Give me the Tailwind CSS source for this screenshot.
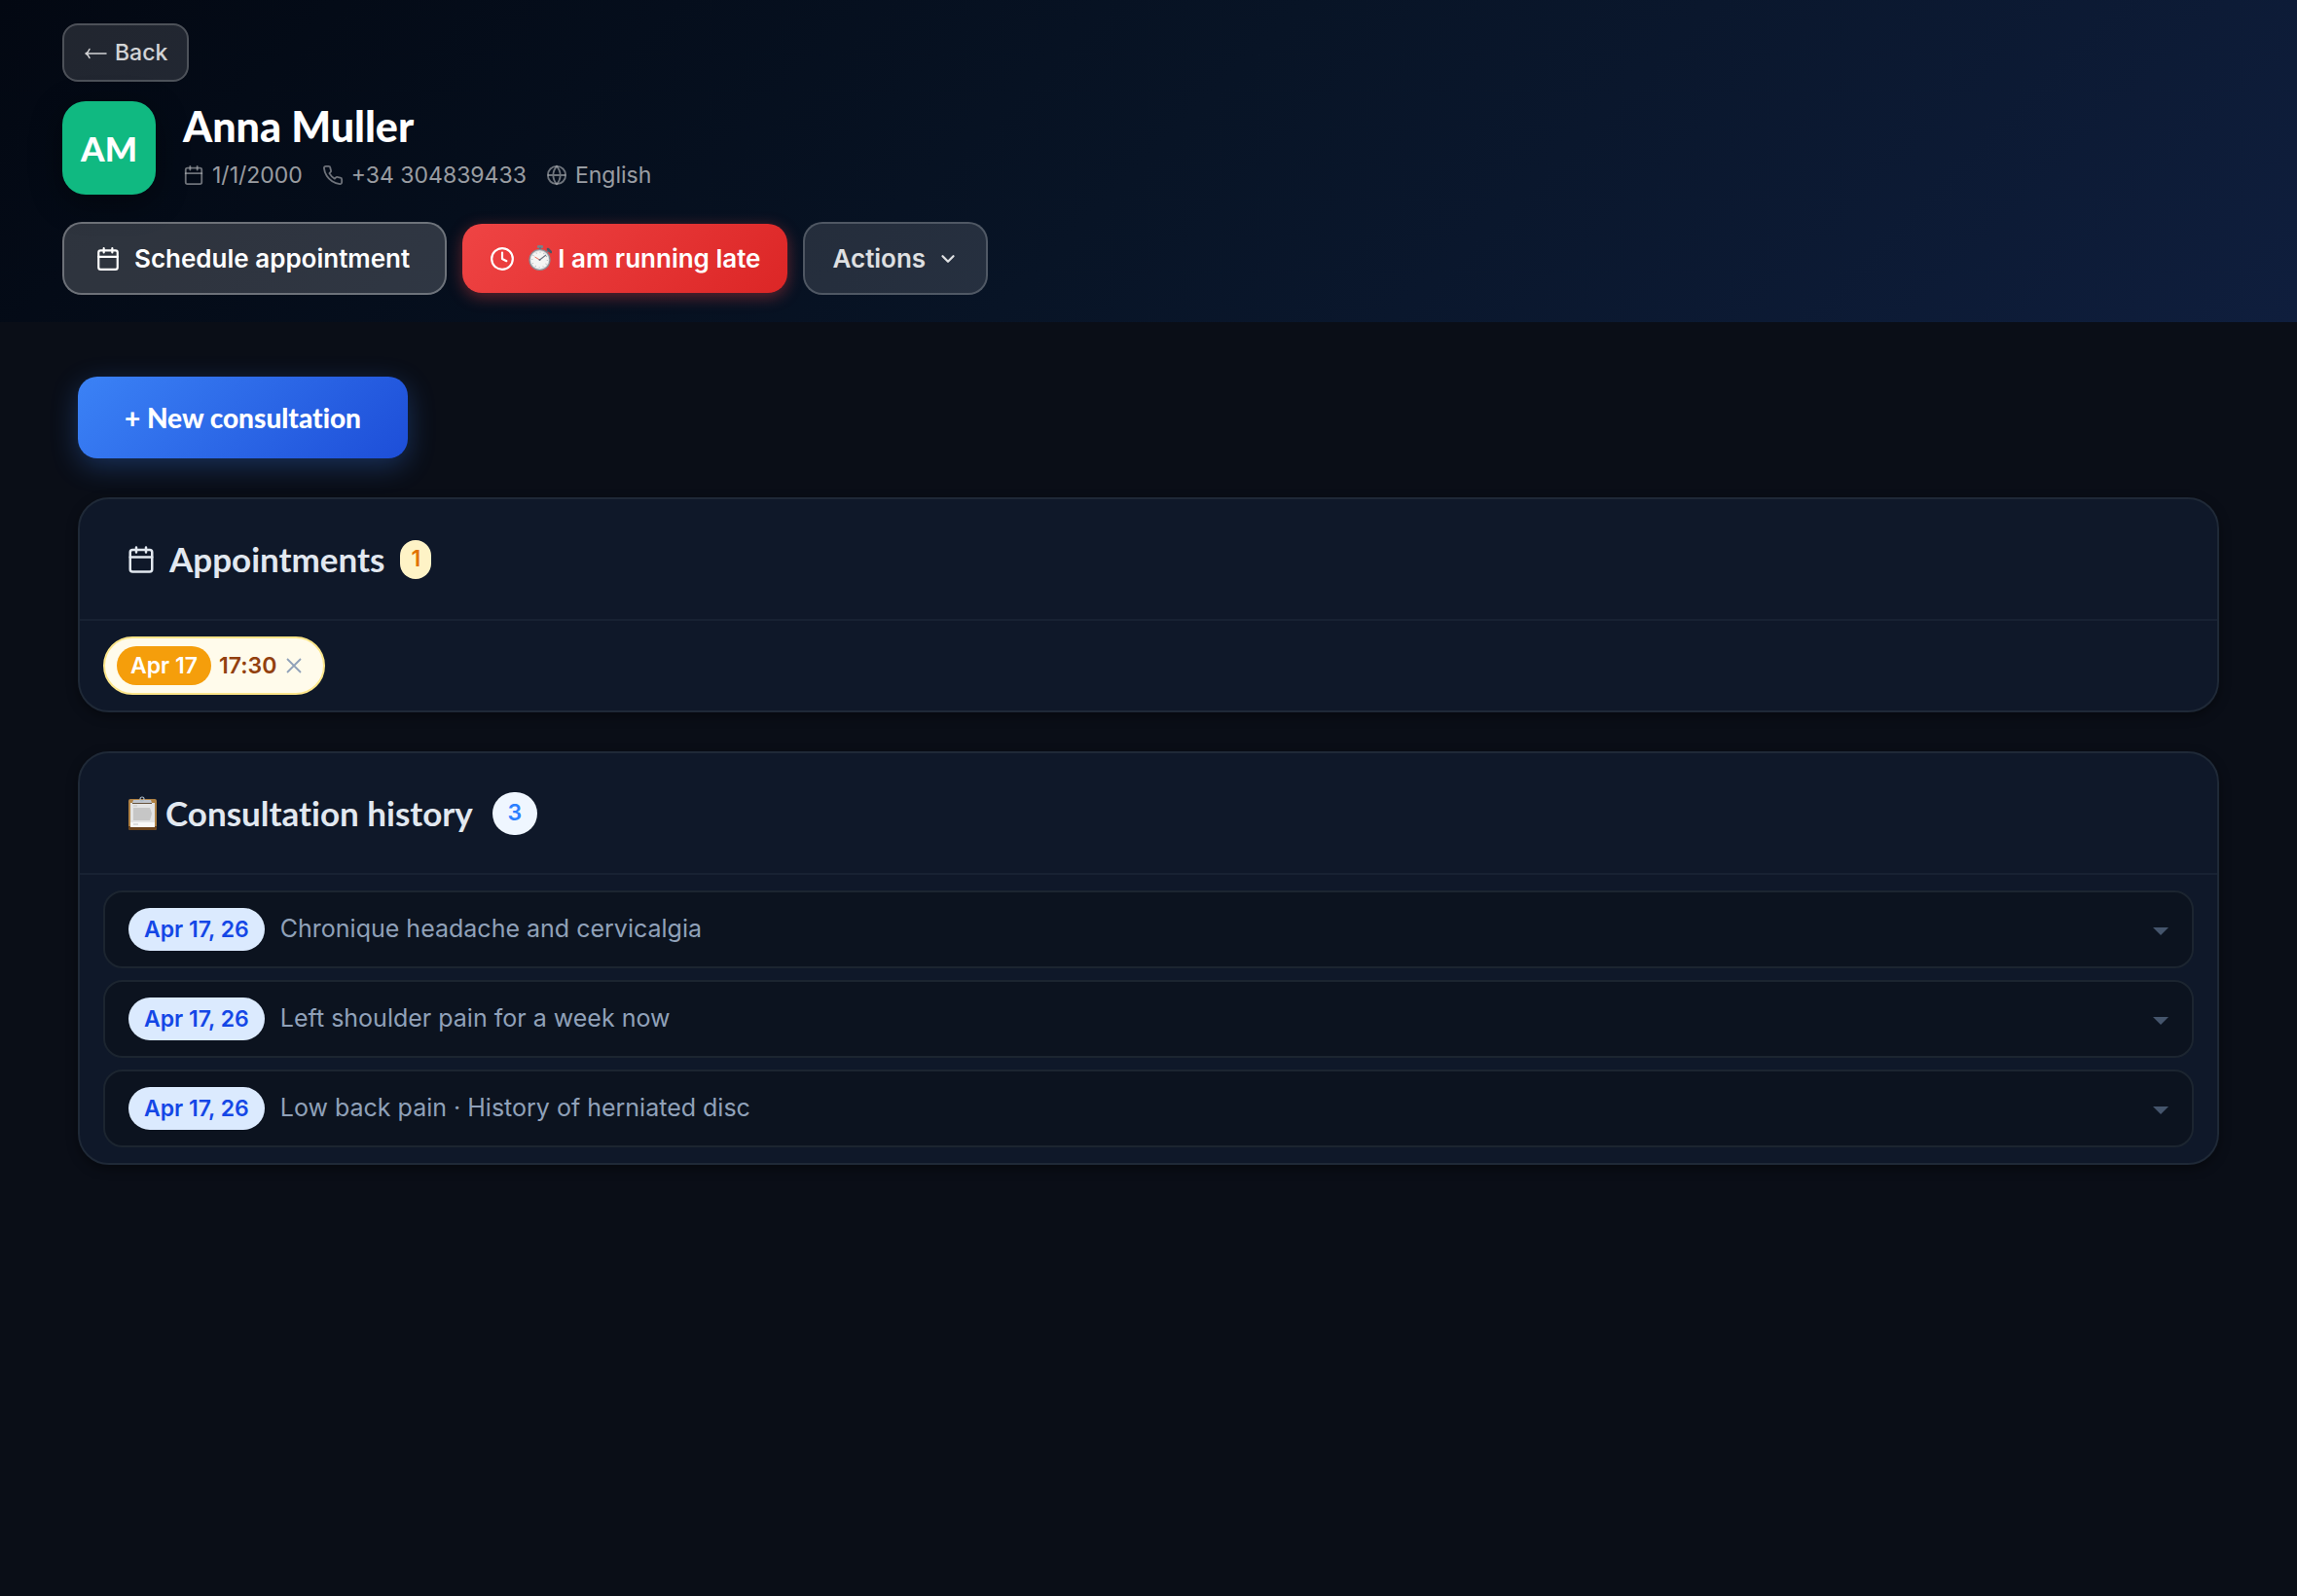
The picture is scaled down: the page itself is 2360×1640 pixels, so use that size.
<!DOCTYPE html>
<html lang="en">
<head>
    <meta charset="UTF-8">
    <meta name="viewport" content="width=device-width, initial-scale=1.0">
    <title>Anna Muller</title>
    <script src="https://cdn.jsdelivr.net/npm/@tailwindcss/browser@4"></script>
</head>
<body class="bg-[#0a0e17] min-h-screen font-['Inter',sans-serif] text-slate-200">
    <!-- Shared icons -->
    <svg class="hidden" aria-hidden="true">
        <symbol id="calendar" viewBox="0 0 24 24" fill="none" stroke="currentColor" stroke-width="2" stroke-linecap="round" stroke-linejoin="round">
            <rect x="3" y="4" width="18" height="18" rx="2"/>
            <path d="M16 2v4M8 2v4M3 10h18"/>
        </symbol>
        <symbol id="caret" viewBox="0 0 16 8">
            <path d="M0 0h16L8 8z" fill="currentColor"/>
        </symbol>
    </svg>

    <header class="bg-linear-135 from-[#030812] via-[#081426] to-[#0f1e3d] px-16 pt-6 pb-7">
        <button type="button" class="flex items-center gap-2 h-15 px-5 rounded-2xl border-2 border-white/20 bg-white/12 text-[23px] font-medium text-white/80">
            <svg class="w-6 h-6" viewBox="0 0 24 24" fill="none" stroke="currentColor" stroke-width="1.5" stroke-linecap="round" stroke-linejoin="round" aria-hidden="true">
                <path d="M23 13H2M6 8.500c-1 2.500-2.500 4-4 4.500 1.500.5 3 2 4 4.500"/>
            </svg>
            Back
        </button>

        <div class="flex items-center gap-7 mt-5">
            <div class="flex items-center justify-center w-24 h-24 rounded-3xl bg-[#10b981] shadow-[0_8px_32px_rgba(0,0,0,0.4)] font-['Lato',sans-serif] text-[35px] font-black text-white">AM</div>
            <div>
                <h1 class="font-['Lato',sans-serif] text-[43px] leading-[48px] font-black text-white">Anna Muller</h1>
                <div class="flex items-center gap-5 mt-2 text-[23px] leading-9 text-white/60">
                    <span class="flex items-center gap-2">
                        <svg class="w-[22px] h-[22px] opacity-70" aria-hidden="true"><use href="#calendar"/></svg>
                        1/1/2000
                    </span>
                    <span class="flex items-center gap-2">
                        <svg class="w-[22px] h-[22px] opacity-70" viewBox="0 0 24 24" fill="none" stroke="currentColor" stroke-width="2" stroke-linecap="round" stroke-linejoin="round" aria-hidden="true">
                            <path d="M22 16.920v3a2 2 0 0 1-2.180 2 19.790 19.790 0 0 1-8.630-3.070 19.500 19.500 0 0 1-6-6 19.790 19.790 0 0 1-3.070-8.670A2 2 0 0 1 4.110 2h3a2 2 0 0 1 2 1.720 12.840 12.840 0 0 0 .7 2.810 2 2 0 0 1-.45 2.110L8.090 9.910a16 16 0 0 0 6 6l1.270-1.270a2 2 0 0 1 2.110-.45 12.840 12.840 0 0 0 2.810.7A2 2 0 0 1 22 16.920z"/>
                        </svg>
                        +34 304839433
                    </span>
                    <span class="flex items-center gap-2">
                        <svg class="w-[22px] h-[22px] opacity-70" viewBox="0 0 24 24" fill="none" stroke="currentColor" stroke-width="2" aria-hidden="true">
                            <circle cx="12" cy="12" r="10"/>
                            <path d="M2 12h20M12 2a15.300 15.300 0 0 1 4 10 15.300 15.300 0 0 1-4 10 15.300 15.300 0 0 1-4-10 15.300 15.300 0 0 1 4-10z"/>
                        </svg>
                        English
                    </span>
                </div>
            </div>
        </div>

        <div class="flex items-center gap-4 mt-7 text-[26px] font-semibold">
            <button type="button" class="flex items-center gap-3.5 h-[75px] pl-8 pr-9 rounded-[20px] border-2 border-white/30 bg-white/17 text-white">
                <svg class="w-[26px] h-[26px]" aria-hidden="true"><use href="#calendar"/></svg>
                Schedule appointment
            </button>
            <button type="button" class="flex items-center gap-3.5 h-[71px] px-7 rounded-[20px] bg-[linear-gradient(135deg,#ef4444,#dc2626)] shadow-[0_4px_16px_rgba(239,68,68,0.4)] text-white">
                <svg class="w-[26px] h-[26px]" viewBox="0 0 24 24" fill="none" stroke="currentColor" stroke-width="2" stroke-linecap="round" stroke-linejoin="round" aria-hidden="true">
                    <circle cx="12" cy="12" r="10"/>
                    <path d="M12 6v6l4 2"/>
                </svg>
                <span class="flex items-center gap-1.5">
                    <svg class="w-6 h-7" viewBox="0 0 24 28" aria-hidden="true">
                        <rect x="9" y="0" width="6" height="3" rx="1" fill="#7c8188"/>
                        <path d="M12 2v3M19 7l2-2" stroke="#6b7280" stroke-width="2"/>
                        <path d="M20 4l3 3" stroke="#4b5563" stroke-width="2.500" stroke-linecap="round"/>
                        <circle cx="11.500" cy="15" r="10.500" fill="#d7dadd" stroke="#8a8f95" stroke-width="1.200"/>
                        <circle cx="11.500" cy="15" r="9" fill="#f5f5f3"/>
                        <circle cx="11.500" cy="15" r="7.800" fill="none" stroke="#a3a7ab" stroke-width="1.200" stroke-dasharray="0.700 3.380"/>
                        <path d="M11.500 15l-5-3" stroke="#ef6b5a" stroke-width="1"/>
                        <path d="M11.500 15l6.500-5" stroke="#6b7280" stroke-width="1.100"/>
                        <circle cx="11.500" cy="15" r="1" fill="#6b7280"/>
                    </svg>
                    I am running late
                </span>
            </button>
            <button type="button" aria-haspopup="menu" class="flex items-center gap-3 h-[75px] px-7 rounded-[20px] border-2 border-white/20 bg-white/12 text-white/85">
                Actions
                <svg class="w-[22px] h-[22px]" viewBox="0 0 24 24" fill="none" stroke="currentColor" stroke-width="2.500" stroke-linecap="round" stroke-linejoin="round" aria-hidden="true">
                    <path d="M6 9l6 6 6-6"/>
                </svg>
            </button>
        </div>
    </header>

    <main class="px-20 pt-14 pb-20 [font-variant-ligatures:none]">
        <button type="button" class="h-[84px] px-12 rounded-[20px] bg-[linear-gradient(135deg,#3b82f6,#1d4ed8)] shadow-[0_8px_28px_rgba(59,130,246,0.3)] font-['Lato',sans-serif] text-[28px] font-black text-white">+ New consultation</button>

        <!-- Appointments -->
        <section class="mt-10 rounded-[32px] border-2 border-[#1f2937] bg-[#0f1829] shadow-[0_4px_12px_rgba(0,0,0,0.4)]">
            <div class="flex items-center h-[125px] px-12 border-b-2 border-[#182233]">
                <svg class="w-[30px] h-[30px]" aria-hidden="true"><use href="#calendar"/></svg>
                <h2 class="ml-3.5 font-['Lato',sans-serif] text-[35px] font-bold">Appointments</h2>
                <span class="flex items-center justify-center w-8 h-10 ml-4 rounded-full bg-amber-100 text-[23px] font-semibold text-amber-600">1</span>
            </div>
            <div class="flex px-6 py-4">
                <div class="flex items-center gap-2 h-15 pl-3 pr-5 rounded-full border-2 border-[#fde68a] bg-[#fffbeb] text-[23px] font-semibold text-[#92400e]">
                    <span class="flex items-center h-10 px-3.5 rounded-full bg-[#f59e0b] text-white">Apr 17</span>
                    17:30
                    <button type="button" aria-label="Cancel appointment" class="text-slate-400">
                        <svg class="w-5 h-5" viewBox="0 0 20 20" fill="none" stroke="currentColor" stroke-width="1.800" aria-hidden="true">
                            <path d="M3 3l14 14M17 3L3 17"/>
                        </svg>
                    </button>
                </div>
            </div>
        </section>

        <!-- Consultation history -->
        <section class="mt-10 rounded-[32px] border-2 border-[#1f2937] bg-[#0f1829] shadow-[0_4px_12px_rgba(0,0,0,0.4)]">
            <div class="flex items-center h-[125px] px-12 border-b-2 border-[#182233]">
                <svg class="w-8 h-9" viewBox="0 0 32 36" aria-hidden="true">
                    <rect x="2" y="3" width="29" height="32" rx="2" fill="#b08245"/>
                    <path d="M2 31h29v2a2 2 0 0 1-2 2H4a2 2 0 0 1-2-2z" fill="#6b431c"/>
                    <path d="M4 7h25v25H4z" fill="#e4e4e4"/>
                    <path d="M4 27h25v5H4z" fill="#f8f8f8"/>
                    <path d="M7 10h4M7 29h5" stroke="#c4c4c4"/>
                    <path d="M7 12h17l2 6-2 7H7z" fill="#c6c6c6"/>
                    <path d="M6 7l1-3h18l1 3z" fill="#bfc4cc"/>
                    <path d="M6 7.500h20" stroke="#65523c"/>
                    <circle cx="16" cy="3" r="2" fill="none" stroke="#aebac6" stroke-width="1.200"/>
                </svg>
                <h2 class="ml-2 font-['Lato',sans-serif] text-[35px] font-bold">Consultation history</h2>
                <span class="flex items-center justify-center w-[46px] h-11 ml-5 rounded-full bg-blue-50 text-[23px] font-semibold text-blue-500">3</span>
            </div>
            <ul class="flex flex-col gap-3 px-6 py-4">
                <li>
                    <button type="button" aria-expanded="false" class="flex items-center gap-4 w-full h-20 px-6 rounded-[20px] border-2 border-[#1c2530] bg-[#0c131f] text-left text-[25px] text-slate-400">
                        <span class="flex items-center h-11 px-4 rounded-full bg-blue-100 text-[23px] font-semibold text-blue-700">Apr 17, 26</span>
                        <span class="flex-1">Chronique headache and cervicalgia</span>
                        <svg class="w-4 h-2 mt-1 text-slate-600" aria-hidden="true"><use href="#caret"/></svg>
                    </button>
                </li>
                <li>
                    <button type="button" aria-expanded="false" class="flex items-center gap-4 w-full h-20 px-6 rounded-[20px] border-2 border-[#1c2530] bg-[#0c131f] text-left text-[25px] text-slate-400">
                        <span class="flex items-center h-11 px-4 rounded-full bg-blue-100 text-[23px] font-semibold text-blue-700">Apr 17, 26</span>
                        <span class="flex-1">Left shoulder pain for a week now</span>
                        <svg class="w-4 h-2 mt-1 text-slate-600" aria-hidden="true"><use href="#caret"/></svg>
                    </button>
                </li>
                <li>
                    <button type="button" aria-expanded="false" class="flex items-center gap-4 w-full h-20 px-6 rounded-[20px] border-2 border-[#1c2530] bg-[#0c131f] text-left text-[25px] text-slate-400">
                        <span class="flex items-center h-11 px-4 rounded-full bg-blue-100 text-[23px] font-semibold text-blue-700">Apr 17, 26</span>
                        <span class="flex-1">Low back pain · History of herniated disc</span>
                        <svg class="w-4 h-2 mt-1 text-slate-600" aria-hidden="true"><use href="#caret"/></svg>
                    </button>
                </li>
            </ul>
        </section>
    </main>
</body>
</html>
